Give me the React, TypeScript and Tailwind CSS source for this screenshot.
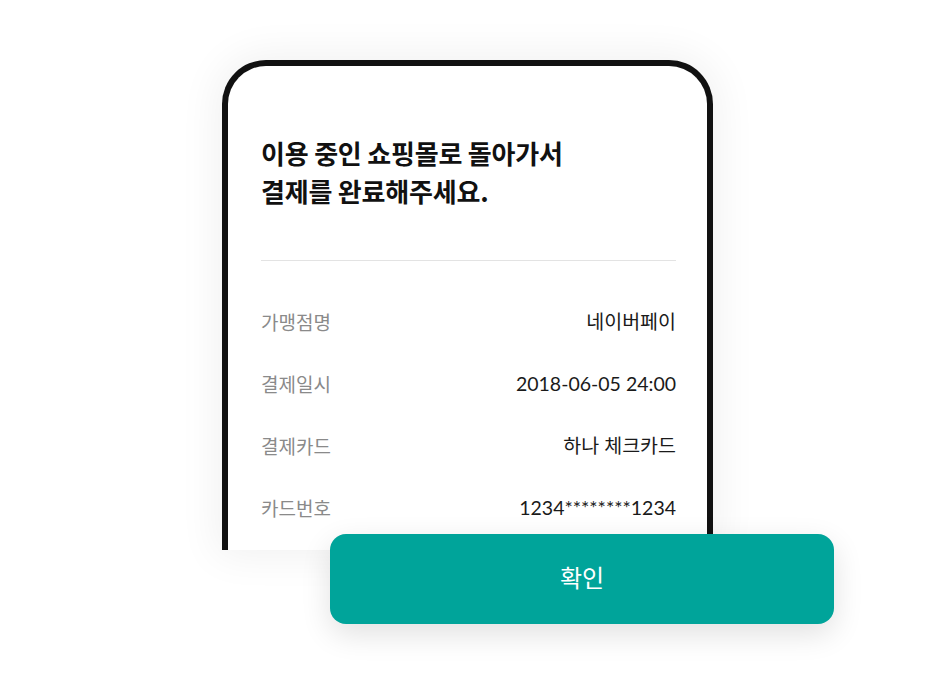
import * as React from 'react'

const rows = [
  { label: '가맹점명', value: '네이버페이' },
  { label: '결제일시', value: '2018-06-05 24:00' },
  { label: '결제카드', value: '하나 체크카드' },
  { label: '카드번호', value: '1234********1234' },
]

export default function App() {
  return (
    <div className="w-[936px] h-[684px] overflow-hidden bg-white pt-[60px] pl-[222px] font-['Lato','Noto_Sans_CJK_KR',sans-serif]">
      <div className="w-[491px] h-[490px] overflow-hidden rounded-t-[44px] border-[6px] border-b-0 border-[#111] bg-white shadow-[0_0_40px_6px_rgba(0,0,0,0.06)] pt-[68px] pl-[33px] pr-[31px]">
        <h1 className="text-[26px] leading-[38px] font-bold text-[#111] tracking-[-0.2px] font-['Noto_Sans_CJK_KR',sans-serif]">
          이용 중인 쇼핑몰로 돌아가서
          <br />
          결제를 완료해주세요.
        </h1>
        <div className="mt-[50px] h-px bg-[#e3e3e3]" />
        <div className="mt-[30px] flex flex-col">
          {rows.map((r) => (
            <div key={r.label} className="h-[62px] flex items-center justify-between">
              <span className="text-[19px] text-[#8a8a8a] font-['Noto_Sans_CJK_KR',sans-serif]">{r.label}</span>
              <span className="text-[19.5px] text-[#1a1a1a]">{r.value}</span>
            </div>
          ))}
        </div>
      </div>
      <button className="relative z-10 ml-[108px] -mt-[16px] w-[504px] h-[90px] rounded-[16px] bg-[#00a49a] text-white text-[24px] font-normal pb-[4px] font-['Noto_Sans_CJK_KR',sans-serif] shadow-[0_10px_30px_rgba(0,0,0,0.12)] flex items-center justify-center">
        확인
      </button>
    </div>
  )
}
